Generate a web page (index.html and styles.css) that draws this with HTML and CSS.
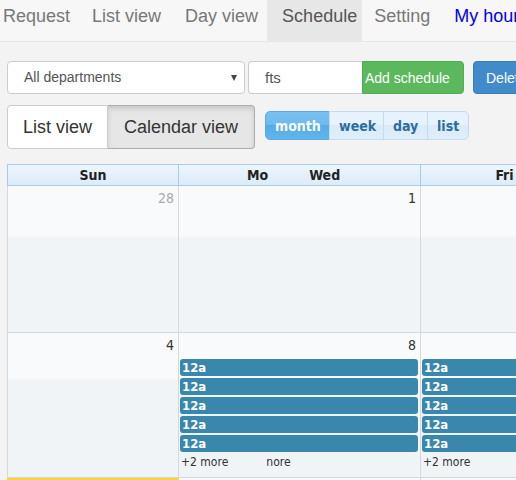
FILE: index.html
```html
<!DOCTYPE html>
<html lang="en">
<head>
<meta charset="utf-8">
<title>Schedule</title>
<link rel="stylesheet" href="styles.css">
</head>
<body>
<nav class="topnav">
  <a class="nav-item first">Request</a>
  <a class="nav-item">List view</a>
  <a class="nav-item tight">Day view</a>
  <a class="nav-item active">Schedule</a>
  <a class="nav-item">Setting</a>
  <a class="nav-item mine">My hours</a>
</nav>
<main class="content">
  <div class="toolbar">
    <div class="select">All departments<span class="caret"></span></div>
    <div class="input">fts</div>
    <button class="btn btn-add">Add schedule</button>
    <button class="btn btn-del">Delete</button>
  </div>
  <div class="viewbar">
    <div class="seg">
      <button class="seg-btn seg-list">List view</button>
      <button class="seg-btn seg-cal on">Calendar view</button>
    </div>
    <div class="fc-btns">
      <button class="fc-btn active">month</button>
      <button class="fc-btn">week</button>
      <button class="fc-btn">day</button>
      <button class="fc-btn last">list</button>
    </div>
  </div>
  <div class="calendar">
    <div class="cal-head">
      <div class="hc">Sun</div>
      <div class="hc hc-mid"><span>Mo</span><span class="wed">Wed</span></div>
      <div class="hc">Fri</div>
    </div>
    <div class="week w1">
      <div class="day"><div class="num other">28</div></div>
      <div class="day"><div class="num">1</div></div>
      <div class="day"><div class="num"></div></div>
    </div>
    <div class="week w2">
      <div class="day"><div class="num">4</div></div>
      <div class="day">
        <div class="num">8</div>
        <div class="events">
          <div class="ev">12a</div>
          <div class="ev">12a</div>
          <div class="ev">12a</div>
          <div class="ev">12a</div>
          <div class="ev">12a</div>
        </div>
        <div class="more"><span>+2 more</span><span class="more2">nore</span></div>
      </div>
      <div class="day">
        <div class="num"></div>
        <div class="events">
          <div class="ev">12a</div>
          <div class="ev">12a</div>
          <div class="ev">12a</div>
          <div class="ev">12a</div>
          <div class="ev">12a</div>
        </div>
        <div class="more"><span>+2 more</span></div>
      </div>
    </div>
    <div class="week w3">
      <div class="day today"></div>
      <div class="day"></div>
      <div class="day"></div>
    </div>
  </div>
</main>
</body>
</html>
```

FILE: styles.css
```css
html, body {
  margin: 0;
  padding: 0;
  width: 516px;
  height: 480px;
  overflow: hidden;
}
body {
  background: #f3f3f3;
  font-family: "Liberation Sans", Arial, sans-serif;
  color: #333;
}

/* top navigation */
.topnav {
  display: flex;
  height: 41px;
  background: #f7f7f7;
  border-bottom: 1px solid #e6e6e6;
  white-space: nowrap;
}
.nav-item {
  display: block;
  padding: 6px 12px 0;
  font-size: 18px;
  line-height: 20px;
  color: #777;
  flex: none;
}
.nav-item.first {
  margin-left: -9px;
  padding-right: 10px;
}
.nav-item.tight { padding-right: 9px; }
.nav-item.active {
  background: #e7e7e7;
  color: #555;
  padding-left: 15px;
  padding-right: 5px;
}
.nav-item.mine { color: #0000ee; }

.content {
  padding-left: 7px;
}

/* toolbar */
.toolbar {
  display: flex;
  margin-top: 19px;
  height: 33px;
  white-space: nowrap;
}
.select {
  position: relative;
  box-sizing: border-box;
  width: 238px;
  height: 33px;
  background: #fff;
  border: 1px solid #ccc;
  border-radius: 4px;
  padding-left: 16px;
  font-size: 14px;
  line-height: 31px;
  color: #555;
  flex: none;
}
.caret {
  position: absolute;
  right: 7px;
  top: 13px;
  width: 0;
  height: 0;
  border-left: 3px solid transparent;
  border-right: 3px solid transparent;
  border-top: 6px solid #444;
}
.input {
  box-sizing: border-box;
  width: 114px;
  height: 33px;
  margin-left: 3px;
  background: #fff;
  border: 1px solid #ccc;
  border-right: none;
  border-radius: 4px 0 0 4px;
  padding-left: 16px;
  font-size: 15px;
  line-height: 31px;
  color: #555;
  flex: none;
}
.btn {
  box-sizing: border-box;
  height: 33px;
  border: 1px solid transparent;
  font-family: "Liberation Sans", Arial, sans-serif;
  font-size: 14px;
  color: #fff;
  text-align: left;
  flex: none;
}
.btn-add {
  width: 102px;
  background: #5cb85c;
  border-color: #4cae4c;
  border-radius: 0 4px 4px 0;
  padding: 0 0 0 2px;
}
.btn-del {
  width: 90px;
  margin-left: 9px;
  background: #428bca;
  border-color: #357ebd;
  border-radius: 4px;
  padding: 0 0 0 12px;
}

/* view bar */
.viewbar {
  display: flex;
  align-items: flex-start;
  margin-top: 11px;
}
.seg {
  display: flex;
  height: 44px;
  flex: none;
}
.seg-btn {
  box-sizing: border-box;
  height: 44px;
  border: 1px solid #ccc;
  background: #fff;
  font-family: "Liberation Sans", Arial, sans-serif;
  font-size: 18px;
  color: #333;
  text-align: left;
  margin: 0;
  flex: none;
}
.seg-list {
  width: 101px;
  padding-left: 15px;
  border-radius: 4px 0 0 4px;
}
.seg-cal {
  width: 147px;
  padding-left: 16px;
  border-left: none;
  border-radius: 0 4px 4px 0;
}
.seg-btn.on {
  background: #e6e6e6;
  border-color: #adadad;
  box-shadow: inset 0 3px 5px rgba(0, 0, 0, 0.125);
}
.fc-btns {
  display: flex;
  margin-left: 10px;
  margin-top: 6px;
  height: 29px;
}
.fc-btn {
  box-sizing: border-box;
  height: 29px;
  margin: 0 0 0 -1px;
  padding: 0 9px;
  border: 1px solid #c5dbec;
  background: linear-gradient(#e6f2fd 0, #e6f2fd 50%, #d9eaf9 50%, #dfeefb 100%);
  color: #2e6e9e;
  font-family: "DejaVu Sans Condensed", "DejaVu Sans", sans-serif;
  font-stretch: condensed;
  font-weight: bold;
  font-size: 14px;
}
.fc-btn.active {
  margin-left: 0;
  border-color: #58a9e4;
  border-radius: 5px 0 0 5px;
  background: linear-gradient(#78c1f0 0, #6cbaee 50%, #53ace8 50%, #62b5ec 100%);
  color: #fff;
  width: 65px;
}
.fc-btn:nth-child(2) { width: 55px; }
.fc-btn:nth-child(3) { width: 45px; }
.fc-btn.last {
  width: 42px;
  border-radius: 0 5px 5px 0;
}

/* calendar */
.calendar {
  margin-top: 15px;
  width: 581px;
  border-left: 1px solid #d8d8d8;
  font-family: "DejaVu Sans Condensed", "DejaVu Sans", sans-serif;
  font-stretch: condensed;
}
.cal-head {
  display: grid;
  grid-template-columns: 171px 242px 168px;
  height: 20px;
  margin-left: -1px;
  border-left: 1px solid #a9cbe6;
  border-top: 1px solid #a9cbe6;
  border-bottom: 1px solid #a9cbe6;
  background: linear-gradient(#ecf5fd, #dbecf9);
}
.hc {
  border-right: 1px solid #a9cbe6;
  font-size: 14px;
  font-weight: bold;
  line-height: 20px;
  text-align: center;
  color: #222;
}
.hc-mid {
  text-align: left;
  padding-left: 68px;
}
.hc-mid .wed { margin-left: 41px; }

.week {
  display: grid;
  grid-template-columns: 171px 242px 168px;
}
.w1 { height: 147px; }
.w2 { height: 145px; }
.w3 { height: 40px; }
.day {
  box-sizing: border-box;
  border-right: 1px solid #d8d8d8;
  border-bottom: 1px solid #d8d8d8;
  background: linear-gradient(#f9fafc 0, #f9fafc 50px, #f1f4f7 52px, #f1f4f7 100%);
}
.w2 .day {
  background: linear-gradient(#f9fafc 0, #f9fafc 45px, #f1f4f7 47px, #f1f4f7 100%);
}
.day.today {
  background: #fbec88;
  border-top: 2px solid #f9d531;
  margin-left: -1px;
}
.num {
  height: 16px;
  padding: 4px 4px 0;
  font-size: 14px;
  line-height: 16px;
  text-align: right;
  color: #333;
}
.num.other { color: #aaa; }
.events {
  margin-top: 6px;
}
.ev {
  height: 17px;
  margin: 0 2px 2px 1px;
  padding-left: 2px;
  border-radius: 3px;
  background: #3a87ad;
  color: #fff;
  font-size: 13px;
  font-weight: bold;
  line-height: 17px;
}
.more {
  margin-top: 3px;
  padding-left: 2px;
  font-size: 12px;
  line-height: 14px;
  color: #333;
  white-space: nowrap;
}
.more2 { margin-left: 38px; }
```
